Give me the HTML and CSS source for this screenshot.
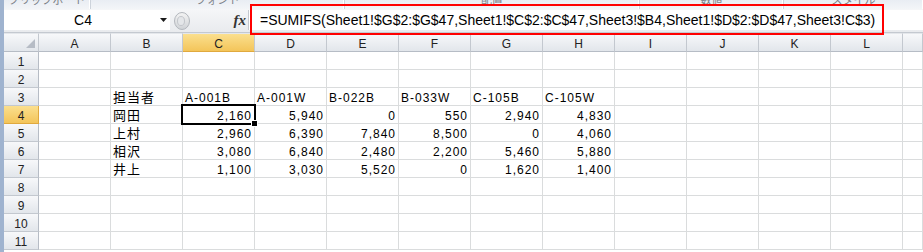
FILE: index.html
```html
<!DOCTYPE html>
<html>
<head>
  <meta charset="UTF-8">
  <title>Excel - SUMIFS</title>
  <link rel="stylesheet" href="styles.css">
</head>
<body>
  <div class="ribbon">
    <div class="grp g1"><span>クリップボード</span></div>
    <div class="grp g2"><span>フォント</span></div>
    <div class="grp g3"><span>配置</span></div>
    <div class="grp g4"><span>数値</span></div>
    <div class="grp g5"><span>スタイル</span></div>
  </div>

  <div class="fbar">
    <div class="namebox">
      <span class="nb-text">C4</span>
      <svg class="nb-arrow" width="7" height="4" viewBox="0 0 7 4"><polygon points="0,0 7,0 3.5,4" fill="#1a1a1a"/></svg>
    </div>
    <div class="tools">
      <svg class="grip" width="16" height="18" viewBox="0 0 16 18">
        <defs>
          <linearGradient id="gg" x1="0" y1="0" x2="0" y2="1">
            <stop offset="0" stop-color="#f4f4f4"/>
            <stop offset="1" stop-color="#cfd2d6"/>
          </linearGradient>
        </defs>
        <ellipse cx="8" cy="9" rx="7.5" ry="8.5" fill="url(#gg)" stroke="#b3b7bd"/>
        <ellipse cx="7" cy="9" rx="3.5" ry="4.5" fill="#e4e6e9" stroke="#c3c6cb"/>
      </svg>
      <span class="fx">fx</span>
    </div>
    <div class="formula">=SUMIFS(Sheet1!$G$2:$G$47,Sheet1!$C$2:$C$47,Sheet3!$B4,Sheet1!$D$2:$D$47,Sheet3!C$3)</div>
  </div>

  <div class="note"></div>

  <div class="sheet-wrap">
  <div class="sheet">
    <!-- column headers -->
    <div class="corner"><svg width="9" height="9" viewBox="0 0 9 9"><polygon points="9,0 9,9 0,9" fill="#b6bcc5"/></svg></div>
    <div class="hd">A</div><div class="hd">B</div><div class="hd sel">C</div><div class="hd">D</div><div class="hd">E</div><div class="hd">F</div><div class="hd">G</div><div class="hd">H</div><div class="hd">I</div><div class="hd">J</div><div class="hd">K</div><div class="hd">L</div><div class="hd"></div>

    <!-- 1 -->
    <div class="rh">1</div><div class="c"></div><div class="c"></div><div class="c"></div><div class="c"></div><div class="c"></div><div class="c"></div><div class="c"></div><div class="c"></div><div class="c"></div><div class="c"></div><div class="c"></div><div class="c"></div><div class="c"></div>
    <!-- 2 -->
    <div class="rh">2</div><div class="c"></div><div class="c"></div><div class="c"></div><div class="c"></div><div class="c"></div><div class="c"></div><div class="c"></div><div class="c"></div><div class="c"></div><div class="c"></div><div class="c"></div><div class="c"></div><div class="c"></div>
    <!-- 3 -->
    <div class="rh">3</div><div class="c"></div><div class="c jp">担当者</div><div class="c">A-001B</div><div class="c">A-001W</div><div class="c">B-022B</div><div class="c">B-033W</div><div class="c">C-105B</div><div class="c">C-105W</div><div class="c"></div><div class="c"></div><div class="c"></div><div class="c"></div><div class="c"></div>
    <!-- 4 -->
    <div class="rh sel">4</div><div class="c"></div><div class="c jp">岡田</div><div class="c num active">2,160</div><div class="c num">5,940</div><div class="c num">0</div><div class="c num">550</div><div class="c num">2,940</div><div class="c num">4,830</div><div class="c"></div><div class="c"></div><div class="c"></div><div class="c"></div><div class="c"></div>
    <!-- 5 -->
    <div class="rh">5</div><div class="c"></div><div class="c jp">上村</div><div class="c num">2,960</div><div class="c num">6,390</div><div class="c num">7,840</div><div class="c num">8,500</div><div class="c num">0</div><div class="c num">4,060</div><div class="c"></div><div class="c"></div><div class="c"></div><div class="c"></div><div class="c"></div>
    <!-- 6 -->
    <div class="rh">6</div><div class="c"></div><div class="c jp">相沢</div><div class="c num">3,080</div><div class="c num">6,840</div><div class="c num">2,480</div><div class="c num">2,200</div><div class="c num">5,460</div><div class="c num">5,880</div><div class="c"></div><div class="c"></div><div class="c"></div><div class="c"></div><div class="c"></div>
    <!-- 7 -->
    <div class="rh">7</div><div class="c"></div><div class="c jp">井上</div><div class="c num">1,100</div><div class="c num">3,030</div><div class="c num">5,520</div><div class="c num">0</div><div class="c num">1,620</div><div class="c num">1,400</div><div class="c"></div><div class="c"></div><div class="c"></div><div class="c"></div><div class="c"></div>
    <!-- 8 -->
    <div class="rh">8</div><div class="c"></div><div class="c"></div><div class="c"></div><div class="c"></div><div class="c"></div><div class="c"></div><div class="c"></div><div class="c"></div><div class="c"></div><div class="c"></div><div class="c"></div><div class="c"></div><div class="c"></div>
    <!-- 9 -->
    <div class="rh">9</div><div class="c"></div><div class="c"></div><div class="c"></div><div class="c"></div><div class="c"></div><div class="c"></div><div class="c"></div><div class="c"></div><div class="c"></div><div class="c"></div><div class="c"></div><div class="c"></div><div class="c"></div>
    <!-- 10 -->
    <div class="rh">10</div><div class="c"></div><div class="c"></div><div class="c"></div><div class="c"></div><div class="c"></div><div class="c"></div><div class="c"></div><div class="c"></div><div class="c"></div><div class="c"></div><div class="c"></div><div class="c"></div><div class="c"></div>
    <!-- 11 -->
    <div class="rh">11</div><div class="c"></div><div class="c"></div><div class="c"></div><div class="c"></div><div class="c"></div><div class="c"></div><div class="c"></div><div class="c"></div><div class="c"></div><div class="c"></div><div class="c"></div><div class="c"></div><div class="c"></div>
  </div>
  </div>
</body>
</html>
```

FILE: styles.css
```css
:root {
  --grid: #dadcdd;
  --head-line: #c3c8cf;
  --head-top: #f7f8fa;
  --head-bottom: #e2e6eb;
  --sel-top: #fbdf8e;
  --sel-bottom: #f3c55a;
  --frame: #9fb3cf;
}

html, body {
  height: 100%;
}

body {
  margin: 0;
  display: flex;
  flex-direction: column;
  border-left: 4px solid var(--frame);
  overflow: hidden;
  background: #fff;
  font-family: "Liberation Sans", "Noto Sans CJK JP", sans-serif;
  color: #000;
}

/* ribbon bottom: group labels cut off */
.ribbon {
  display: flex;
  flex: none;
  height: 9px;
  overflow: hidden;
  background: linear-gradient(#e9edf3, #f3f5f8);
}

.grp {
  border-right: 1px solid #cdd3db;
  box-shadow: inset -1px 0 0 #fff;
  text-align: center;
  overflow: hidden;
}

.grp span {
  display: block;
  margin-top: -8px;
  font-family: "Noto Sans CJK JP", sans-serif;
  font-size: 11px;
  line-height: 14px;
  color: #7a7f86;
}

.g1 { width: 86px; }
.g2 { width: 253px; }
.g3 { width: 294px; }
.g4 { width: 143px; }
.g5 { flex: 1; border-right: none; }

/* formula bar */
.fbar {
  display: flex;
  flex: none;
  height: 24px;
  box-sizing: border-box;
  background: linear-gradient(#f5f6f8, #e9ebee);
  border-bottom: 1px solid #c4c9d0;
}

.namebox {
  display: flex;
  align-items: center;
  width: 166px;
  margin: 1px 0 2px;
  background: #fff;
}

.nb-text {
  flex: 1;
  text-align: center;
  font-size: 14px;
  line-height: 19px;
  padding-top: 1px;
  padding-left: 2px;
}

.nb-arrow {
  margin-right: 3px;
}

.tools {
  display: flex;
  align-items: center;
  width: 78px;
}

.grip {
  margin-left: 4px;
}

.fx {
  margin-left: auto;
  margin-right: 2px;
  font-family: "Liberation Serif", serif;
  font-style: italic;
  font-weight: bold;
  font-size: 15px;
  color: #333;
}

.formula {
  flex: 1;
  min-width: 0;
  margin: 1px 0 2px;
  padding: 1px 0 0 11px;
  background: #fff;
  border-left: 1px solid #c4c9d0;
  font-size: 14px;
  line-height: 19px;
  white-space: nowrap;
  overflow: hidden;
}

/* red annotation frame over the formula */
.note {
  position: absolute;
  left: 250px;
  top: 4px;
  width: 634px;
  height: 31px;
  box-sizing: border-box;
  border: 2px solid #ff0000;
}

/* sheet grid */
.sheet-wrap {
  flex: 1;
  min-height: 0;
  overflow: hidden;
}

.sheet {
  display: grid;
  grid-template-columns: 35px repeat(12, 72px) 1fr;
  grid-template-rows: 19px;
  grid-auto-rows: 18px;
}

.sheet > div {
  box-sizing: border-box;
  white-space: nowrap;
}

.corner {
  display: flex;
  justify-content: flex-end;
  align-items: flex-end;
  padding: 0 3px 3px 0;
  background: linear-gradient(var(--head-top), var(--head-bottom));
  border-right: 1px solid var(--head-line);
  border-bottom: 1px solid #b6bcc5;
  border-top: 1px solid #e4e7eb;
}

.hd {
  text-align: center;
  font-size: 12px;
  line-height: 14px;
  padding-top: 3px;
  color: #222;
  background: linear-gradient(var(--head-top), var(--head-bottom));
  border-right: 1px solid var(--head-line);
  border-bottom: 1px solid #b6bcc5;
  border-top: 1px solid #e4e7eb;
}

.rh {
  text-align: center;
  font-size: 12px;
  line-height: 14px;
  padding-top: 3px;
  color: #222;
  background: linear-gradient(var(--head-top), var(--head-bottom));
  border-right: 1px solid #b6bcc5;
  border-bottom: 1px solid var(--head-line);
}

.hd.sel, .rh.sel {
  background: linear-gradient(var(--sel-top), var(--sel-bottom));
  border-bottom-color: #e0a93e;
}

.rh.sel {
  border-right-color: #e0a93e;
}

.c {
  font-size: 12px;
  letter-spacing: 1px;
  line-height: 14px;
  padding: 3px 2px 0 2px;
  border-right: 1px solid var(--grid);
  border-bottom: 1px solid var(--grid);
}

.c.jp {
  font-size: 13px;
  letter-spacing: 1px;
}

.c.num {
  text-align: right;
  padding-right: 2px;
}

.c.active {
  position: relative;
}

.c.active::after {
  content: "";
  position: absolute;
  left: -2px;
  top: -2px;
  right: -2px;
  bottom: -2px;
  border: 2px solid #000;
}

.c.active::before {
  content: "";
  position: absolute;
  right: -4px;
  bottom: -4px;
  width: 5px;
  height: 5px;
  background: #000;
  border: 1px solid #fff;
  z-index: 1;
}
```
